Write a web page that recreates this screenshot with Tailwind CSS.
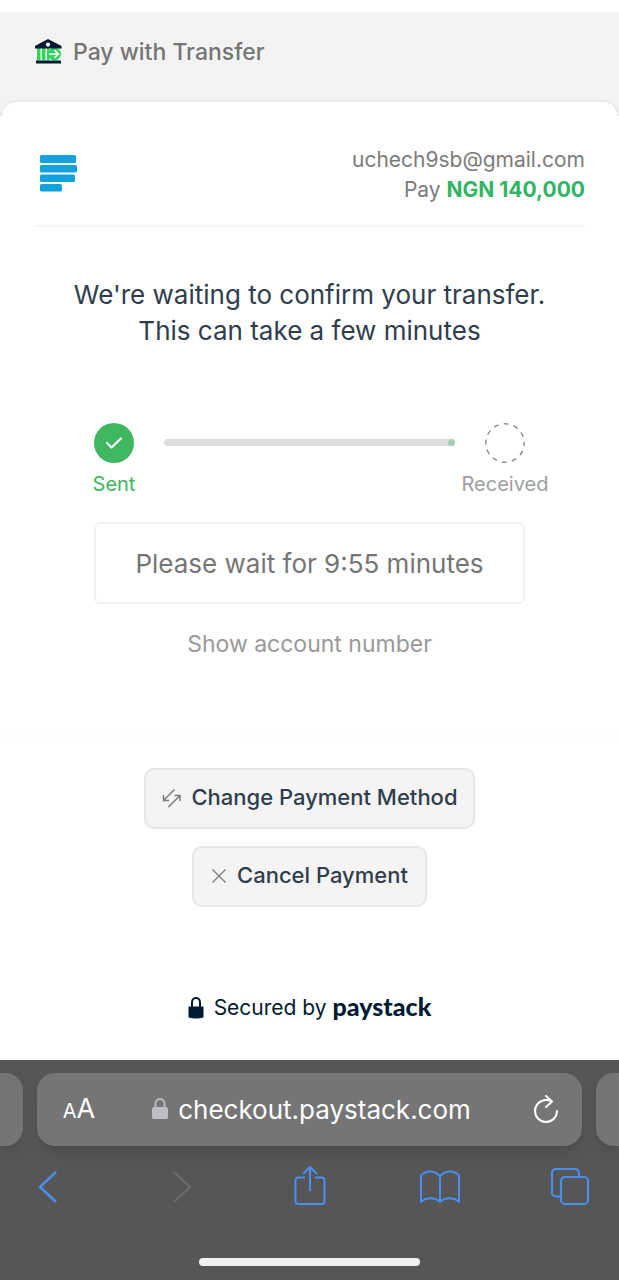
<!DOCTYPE html>
<html lang="en">
<head>
    <meta charset="UTF-8">
    <meta name="viewport" content="width=device-width, initial-scale=1.0">
    <title>Pay with Transfer</title>
    <script src="https://cdn.jsdelivr.net/npm/@tailwindcss/browser@4"></script>
</head>
<body class="bg-white font-['Inter',sans-serif] antialiased flex flex-col min-h-screen">

    <!-- Channel header -->
    <header class="mt-3 bg-[#f3f3f3]">
        <div class="flex items-center gap-[11px] h-20 px-[34px]">
            <svg class="w-7 h-7" viewBox="0 0 28 28" fill="none" aria-hidden="true">
                <path d="M3 10h22v12.500H3z" fill="#fff"/>
                <path d="M3 10h3.500v12.500H3zM8 10h3.500v12.500H8zM13 10h2.500v12.500H13z" fill="#2fd65a"/>
                <circle cx="20.500" cy="16" r="6.500" fill="#2fd65a"/>
                <path d="M15 16h9M20.500 12.200l3.800 3.800-3.800 3.800" stroke="#fff" stroke-width="1.700"/>
                <path fill-rule="evenodd" d="M14 1 27.500 8v2.500H1V8zM14 4.500a2.100 2.100 0 1 0 0 4.200A2.100 2.100 0 0 0 14 4.500z" fill="#011b33"/>
                <path d="M2 22.500h25v3H2z" fill="#011b33"/>
            </svg>
            <h1 class="text-[23px] font-medium text-[#757575]">Pay with Transfer</h1>
        </div>
        <div class="h-2"></div>
        <div class="h-4 bg-white rounded-t-2xl border-2 border-b-0 border-[#e9e9e9]"></div>
    </header>

    <main class="flex-1 flex flex-col">
        <section class="px-[34px] pb-[70px]">
            <div class="flex items-center justify-between pt-[29px] pb-5 border-b-2 border-[#f5f5f5]">
                <svg class="w-12 h-12" viewBox="0 0 48 48" fill="#11a2dc" role="img" aria-label="Paystack">
                    <rect x="6" y="4" width="36" height="8" rx="1.500"/>
                    <rect x="6" y="14" width="37" height="7.500" rx="1.500"/>
                    <rect x="6" y="23.500" width="35" height="7.500" rx="1.500"/>
                    <rect x="6" y="33" width="22" height="7.500" rx="1.500"/>
                </svg>
                <div class="text-right text-[21px] leading-[30px] text-[#7b7b7b]">
                    <p>uchech9sb@gmail.com</p>
                    <p>Pay <strong class="font-bold text-[#2fb563]">NGN 140,000</strong></p>
                </div>
            </div>

            <h2 class="mt-[50px] text-center text-[26px] leading-9 text-[#2f3d4d]">
                We're waiting to confirm your transfer.<br>This can take a few minutes
            </h2>

            <!-- Progress -->
            <div class="mt-[74px] pl-[50px] pr-[30px] flex justify-between">
                <div class="flex flex-col items-center w-[60px]">
                    <svg class="w-10 h-10" viewBox="0 0 40 40" fill="none" aria-hidden="true">
                        <circle cx="20" cy="20" r="20" fill="#3eb75e"/>
                        <path d="m13 20 4.500 4.500 9.500-9" stroke="#fff" stroke-width="2.200" stroke-linecap="round" stroke-linejoin="round"/>
                    </svg>
                    <span class="mt-[7px] text-xl text-[#3eb75e]">Sent</span>
                </div>
                <div class="flex-1 ml-5 mt-4 h-[7px] rounded-full bg-[#dedede] flex justify-end">
                    <div class="size-[7px] rounded-full bg-[#a3d0b1]"></div>
                </div>
                <div class="flex flex-col items-center w-[100px]">
                    <svg class="w-10 h-10" viewBox="0 0 40 40" fill="none" aria-hidden="true">
                        <circle cx="20" cy="20" r="19.200" stroke="#8a8a8a" stroke-width="1.400" stroke-dasharray="5 5.050" stroke-dashoffset="2"/>
                    </svg>
                    <span class="mt-[7px] text-xl text-[#9e9e9e]">Received</span>
                </div>
            </div>

            <p class="mt-6 mx-[60px] h-[82px] flex items-center justify-center rounded-md border-2 border-[#f1f1f1] text-[26px] text-[#757575]">Please wait for 9:55 minutes</p>
            <div class="mt-6 text-center">
                <button type="button" class="text-[23px] leading-8 text-[#999]">Show account number</button>
            </div>
        </section>
        <div class="h-2 bg-[#fdfdfd]"></div>

        <div class="mt-[30px] flex flex-col items-center gap-[17px]">
            <button type="button" class="h-[61px] px-[15px] pb-0.5 flex items-center gap-1.5 rounded-[10px] border-2 border-[#e6e6e6] bg-[#f4f4f4] text-[22px] font-medium text-[#2f3d4d]">
                <svg class="w-6 h-5" viewBox="0 0 24 20" fill="none" stroke="#7b7b7b" stroke-width="1.500" aria-hidden="true">
                    <path d="M13.500 1.500 2.500 12.500M2.500 7V12.500H8M7.500 19l11.500-11.500M13.500 7.500H19V13"/>
                </svg>
                Change Payment Method
            </button>
            <button type="button" class="h-[61px] px-[17px] pb-0.5 flex items-center gap-2.5 rounded-[10px] border-2 border-[#e6e6e6] bg-[#f4f4f4] text-[22px] font-medium text-[#2f3d4d]">
                <svg class="w-4 h-4" viewBox="0 0 16 16" fill="none" stroke="#7b7b7b" stroke-width="1.300" aria-hidden="true">
                    <path d="m1.500 1.500 13 13M14.500 1.500l-13 13"/>
                </svg>
                Cancel Payment
            </button>
        </div>

        <footer class="mt-[85px] mb-9 flex items-center justify-center text-[#011b33]">
            <svg class="w-4 h-6" viewBox="0 0 16 24" fill="none" aria-hidden="true">
                <path d="M.500 10.500h15v11q-7.500 2-15 0z" fill="#011b33"/>
                <path d="M4 11V6a4 4 0 0 1 8 0v5" stroke="#011b33" stroke-width="2"/>
            </svg>
            <span class="ml-2.5 text-[21px] leading-8">Secured by</span>
            <span class="ml-1.5 pb-1 text-[25px] leading-7 font-['Lato',sans-serif] font-black">paystack</span>
        </footer>
    </main>

    <!-- Browser toolbar -->
    <div class="bg-[#565656] pt-[13px]">
        <div class="flex gap-3.5">
            <div class="w-[23px] h-[73px] rounded-r-[18px] bg-[#757575] shadow-lg"></div>
            <div class="flex-1 h-[73px] px-6 rounded-[18px] bg-[#757575] shadow-lg flex items-center justify-between text-white">
                <button type="button" aria-label="Page settings" class="w-9 flex items-baseline justify-center"><span class="text-xl">A</span><span class="text-[27px]">A</span></button>
                <label class="flex items-center gap-2.5 pr-2">
                    <svg class="w-4 h-6" viewBox="0 0 16 24" fill="none" aria-hidden="true">
                        <rect y="9" width="16" height="12" rx="2" fill="#bfbdc4"/>
                        <path d="M3.500 10V5.500a4.500 4.500 0 0 1 9 0V10" stroke="#bfbdc4" stroke-width="1.800"/>
                    </svg>
                    <input type="text" aria-label="Address" value="checkout.paystack.com" class="field-sizing-content text-[26px] outline-none">
                </label>
                <button type="button" aria-label="Reload">
                    <svg class="w-6 h-[30px]" viewBox="0 0 24 30" fill="none" stroke="#fff" stroke-width="2" stroke-linecap="round" stroke-linejoin="round" aria-hidden="true">
                        <path d="M17.500 6Q15 5 12 5A11 11 0 1 0 23 16M12 1l6 5.500-6 5.500"/>
                    </svg>
                </button>
            </div>
            <div class="w-[23px] h-[73px] rounded-l-[18px] bg-[#757575] shadow-lg"></div>
        </div>

        <nav class="mt-[19px] px-[29px] flex justify-between text-[#4a8ff0]">
            <button type="button" aria-label="Back">
                <svg class="w-10 h-11" viewBox="0 0 40 44" fill="none" stroke="currentColor" stroke-width="2.500" aria-hidden="true">
                    <path d="M27 7 11 22l16 15"/>
                </svg>
            </button>
            <button type="button" aria-label="Forward" class="text-[#6c6c6c]" disabled>
                <svg class="w-10 h-11" viewBox="0 0 40 44" fill="none" stroke="currentColor" stroke-width="2.200" aria-hidden="true">
                    <path d="m15 7 16 15-16 15"/>
                </svg>
            </button>
            <button type="button" aria-label="Share">
                <svg class="w-10 h-11" viewBox="0 0 40 44" fill="none" stroke="currentColor" stroke-width="2" stroke-linejoin="round" aria-hidden="true">
                    <path d="M15 12.500H8.500a3 3 0 0 0-3 3V36a3 3 0 0 0 3 3h23a3 3 0 0 0 3-3V15.500a3 3 0 0 0-3-3H25M20 26V2M13 9l7-7 7 7"/>
                </svg>
            </button>
            <button type="button" aria-label="Bookmarks">
                <svg class="w-10 h-11" viewBox="0 0 40 44" fill="none" stroke="currentColor" stroke-width="2" stroke-linejoin="round" aria-hidden="true">
                    <path d="M20 11.500C15 5 6 5 1 10.500V37c5-5 14-5 19 0 5-5 14-5 19 0V10.500C34 5 25 5 20 11.500zM20 11.500V37"/>
                </svg>
            </button>
            <button type="button" aria-label="Tabs">
                <svg class="w-10 h-11" viewBox="0 0 40 44" fill="none" stroke="currentColor" stroke-width="2.200" aria-hidden="true">
                    <rect x="11" y="12" width="27" height="27" rx="4"/>
                    <path d="M11 31.500H6a4 4 0 0 1-4-4V8a4 4 0 0 1 4-4h19a4 4 0 0 1 4 4v4"/>
                </svg>
            </button>
        </nav>

        <div class="pt-[49px] pb-3.5">
            <div class="mx-auto w-[221px] h-2 rounded-full bg-[#f1f1f1]"></div>
        </div>
    </div>
</body>
</html>
